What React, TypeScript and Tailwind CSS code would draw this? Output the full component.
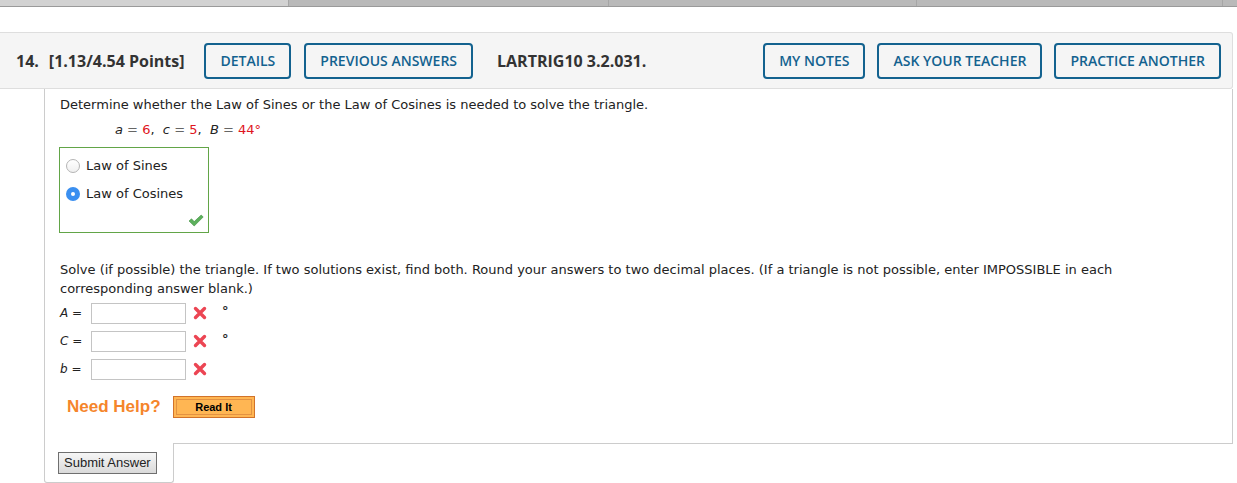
import React from "react";

const verdana = { fontFamily: '"DejaVu Sans", Verdana, sans-serif' };

function HeaderButton({ label }: { label: string }) {
  return (
    <button className="h-[36px] rounded-[4px] border-2 border-[#13628f] bg-transparent px-[14px] text-[14px] font-semibold text-[#13628f]">
      {label}
    </button>
  );
}

function Radio({ checked }: { checked?: boolean }) {
  if (checked) {
    return (
      <span className="flex h-[14px] w-[14px] items-center justify-center rounded-full bg-[#3a8ff0]">
        <span className="h-[4px] w-[4px] rounded-full bg-white" />
      </span>
    );
  }
  return <span className="h-[14px] w-[14px] rounded-full border border-[#b4b4b4] bg-gradient-to-b from-white to-[#f0f0f0]" />;
}

function RedX() {
  return (
    <svg width="14" height="14" viewBox="0 0 14 14">
      <path d="M2.5 2.5 L11.5 11.5 M11.5 2.5 L2.5 11.5" stroke="#ec4553" strokeWidth="3.4" strokeLinecap="round" />
    </svg>
  );
}

function Check() {
  return (
    <svg width="16" height="13" viewBox="0 0 16 13">
      <path d="M1 7 L3.5 4.8 L6.2 7.6 L13.2 1 L15.2 3 L6.2 12 Z" fill="#5cb05c" stroke="#3f8f3f" strokeWidth="0.6" />
    </svg>
  );
}

function AnswerRow({ label, degree }: { label: string; degree?: boolean }) {
  return (
    <div className="flex h-[28px] items-center">
      <span className="w-[31px] text-[12px] text-[#222]">
        <i>{label}</i> =
      </span>
      <input className="h-[21px] w-[95px] border border-[#c4c4c4] bg-white" />
      <span className="ml-[7px] flex items-center">
        <RedX />
      </span>
      {degree && <span className="ml-[15px] -mt-[4px] text-[13px] font-bold text-[#222]">°</span>}
    </div>
  );
}

export default function App() {
  return (
    <div className="min-h-screen bg-white text-[#222]">
      {/* top tab strip */}
      <div className="flex h-[7px] border-b border-[#9a9a9a]">
        <div className="w-[288px] bg-[#d2d2d2]" />
        <div className="w-[320px] border-l border-[#a6a6a6] bg-[#b9b9b9]" />
        <div className="w-[308px] border-l border-[#a6a6a6] bg-[#b9b9b9]" />
        <div className="w-[306px] border-l border-[#a6a6a6] bg-[#b9b9b9]" />
        <div className="flex-1 border-l border-[#a6a6a6] bg-[#b9b9b9]" />
      </div>

      {/* question header */}
      <div
        className="mt-[25px] flex h-[57px] w-[1233px] items-center rounded-r-[3px] border-y border-r border-[#dedede] bg-[#f5f5f5] pl-[16px] pr-[11px]"
        style={{ fontFamily: '"Open Sans", sans-serif' }}
      >
        <span className="text-[16px] font-bold text-[#333]">14.</span>
        <span className="ml-[10px] text-[16px] font-bold text-[#333]">[1.13/4.54 Points]</span>
        <div className="ml-[20px] flex gap-[13px]">
          <HeaderButton label="DETAILS" />
          <HeaderButton label="PREVIOUS ANSWERS" />
        </div>
        <span className="ml-[24px] text-[16px] font-bold text-[#333]">LARTRIG10 3.2.031.</span>
        <div className="ml-auto flex gap-[12px]">
          <HeaderButton label="MY NOTES" />
          <HeaderButton label="ASK YOUR TEACHER" />
          <HeaderButton label="PRACTICE ANOTHER" />
        </div>
      </div>

      {/* question body */}
      <div className="ml-[44px] w-[1189px]" style={verdana}>
        <div className="border-x border-b border-[#cccccc] pl-[15px] pr-[30px] pt-[6px] pb-[23px] text-[13px]">
          <p className="leading-[19px]">Determine whether the Law of Sines or the Law of Cosines is needed to solve the triangle.</p>
          <p className="mt-[6px] pl-[55px] leading-[19px]">
            <i>a</i> <span className="text-[#666]">=</span> <span className="text-[#e0151d]">6</span>,&nbsp; <i>c</i>{" "}
            <span className="text-[#666]">=</span> <span className="text-[#e0151d]">5</span>,&nbsp; <i>B</i>{" "}
            <span className="text-[#666]">=</span> <span className="text-[#e0151d]">44°</span>
          </p>

          <div className="-ml-px mt-[8px] flex h-[86px] w-[150px] flex-col border border-[#62a547] pl-[6px] pt-[4px]">
            <label className="flex h-[28px] items-center gap-[6px]">
              <Radio />
              <span>Law of Sines</span>
            </label>
            <label className="flex h-[28px] items-center gap-[6px]">
              <Radio checked />
              <span>Law of Cosines</span>
            </label>
            <div className="mr-[4px] mt-auto mb-[5px] flex justify-end">
              <Check />
            </div>
          </div>

          <p className="mt-[27px] leading-[19px]">
            Solve (if possible) the triangle. If two solutions exist, find both. Round your answers to two decimal places. (If
            a triangle is not possible, enter IMPOSSIBLE in each corresponding answer blank.)
          </p>
          <div className="mt-[1px]">
            <AnswerRow label="A" degree />
            <AnswerRow label="C" degree />
            <AnswerRow label="b" />
          </div>

          <div className="mt-[11px] flex items-center pl-[7px]" style={{ fontFamily: '"Liberation Sans", Arial, sans-serif' }}>
            <span className="text-[17px] font-bold text-[#f5852b]">Need Help?</span>
            <button className="ml-[12px] h-[22px] w-[82px] border border-[#d2732a] bg-[#ffb653] p-[2px]">
              <span className="flex h-full items-center justify-center border border-[#e39242] text-[11px] font-bold text-black">
                Read It
              </span>
            </button>
          </div>
        </div>

        {/* submit tab */}
        <div className="-mt-px flex h-[40px] w-[130px] items-start rounded-b-[3px] border-x border-b border-[#cccccc] bg-white pl-[13px] pt-[9px]">
          <button
            className="h-[22px] border border-[#6f6f6f] bg-gradient-to-b from-[#f6f6f6] to-[#dadada] px-[5px] text-[13px] text-[#222]"
            style={{ fontFamily: '"Liberation Sans", Arial, sans-serif' }}
          >
            Submit Answer
          </button>
        </div>
      </div>
    </div>
  );
}
